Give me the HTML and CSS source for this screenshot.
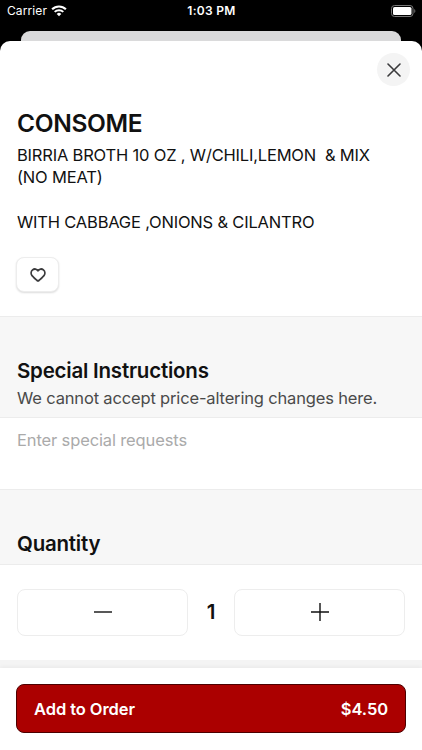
FILE: index.html
```html
<!DOCTYPE html>
<html lang="en">
<head>
    <meta charset="UTF-8">
    <meta name="viewport" content="width=device-width, initial-scale=1.0">
    <title>Consome</title>
    <link rel="stylesheet" href="styles.css">
</head>
<body>
    <div class="status-bar">
        <div class="carrier">
            <span>Carrier</span>
            <svg class="wifi-icon" width="16" height="12" viewBox="0 0 16 12" fill="none" stroke="#fff">
                <path d="M1.1 4.3a9.8 9.8 0 0 1 13.8 0" stroke-width="2.1"/>
                <path d="M3.7 6.9a6.1 6.1 0 0 1 8.6 0" stroke-width="2"/>
                <path d="M8 11.3L5.7 8.9a3.3 3.3 0 0 1 4.6 0z" fill="#fff" stroke="none"/>
            </svg>
        </div>
        <div class="time">1:03 PM</div>
        <div class="battery">
            <svg width="25" height="12" viewBox="0 0 25 12">
                <rect x="0.5" y="0.5" width="21.5" height="11" rx="3" fill="none" stroke="#777"/>
                <rect x="2" y="2" width="18.5" height="8" rx="1.6" fill="#fff"/>
                <path d="M23.3 4v4c1.4-.6 1.4-3.4 0-4z" fill="#777"/>
            </svg>
        </div>
    </div>
    <div class="back-sheet"></div>

    <div class="sheet">
        <div class="product">
            <button class="close-button" aria-label="Close">
                <svg width="14" height="14" viewBox="0 0 14 14" fill="none" stroke="#3a3a3c" stroke-width="1.6" stroke-linecap="round">
                    <path d="M1 1l12 12M13 1L1 13"/>
                </svg>
            </button>
            <h1 class="product-title">CONSOME</h1>
            <p class="product-desc">BIRRIA BROTH 10 OZ , W/CHILI,LEMON  &amp; MIX
(NO MEAT)

WITH CABBAGE ,ONIONS &amp; CILANTRO</p>
            <button class="like-button" aria-label="Favorite">
                <svg width="16" height="14" viewBox="0 0 16 14" fill="none" stroke="#3a3a3c" stroke-width="1.8" stroke-linejoin="round">
                    <path d="M8 2.7C6.8.8 4.3.5 2.6 1.9.8 3.4.7 6 2.2 7.8 3.5 9.5 5.2 11 7 12.4c.7.5 1.3.5 2 0 1.8-1.4 3.5-2.9 4.8-4.6 1.5-1.8 1.4-4.4-.4-5.9C11.7.5 9.2.8 8 2.7z"/>
                </svg>
            </button>
        </div>

        <div class="section-header instructions-header">
            <h2>Special Instructions</h2>
            <p>We cannot accept price-altering changes here.</p>
        </div>
        <textarea class="requests" placeholder="Enter special requests"></textarea>

        <div class="section-header quantity-header">
            <h2>Quantity</h2>
        </div>
        <div class="quantity-selector">
            <button class="step-button" id="minusButton" aria-label="Decrease">
                <svg width="18" height="18" viewBox="0 0 18 18" stroke="#111" stroke-width="1.4">
                    <path d="M0 9h18"/>
                </svg>
            </button>
            <span class="quantity" id="quantity">1</span>
            <button class="step-button" id="plusButton" aria-label="Increase">
                <svg width="18" height="18" viewBox="0 0 18 18" stroke="#111" stroke-width="1.4">
                    <path d="M0 9h18M9 0v18"/>
                </svg>
            </button>
        </div>
        <div class="spacer"></div>

        <div class="footer">
            <button class="order-button">
                <span>Add to Order</span>
                <span class="order-price" id="totalPrice">$4.50</span>
            </button>
        </div>
    </div>

    <script>
        const price = 4.5;
        let qty = 1;

        function changeQuantity(diff) {
            qty = Math.max(1, qty + diff);
            document.getElementById('quantity').textContent = qty;
            document.getElementById('totalPrice').textContent = '$' + (qty * price).toFixed(2);
        }

        document.getElementById('minusButton').addEventListener('click', function() {
            changeQuantity(-1);
        });
        document.getElementById('plusButton').addEventListener('click', function() {
            changeQuantity(1);
        });
    </script>
</body>
</html>
```

FILE: styles.css
```css
* {
    box-sizing: border-box;
}
body {
    margin: 0;
    height: 750px;
    background-color: #000;
    font-family: Inter, sans-serif;
    color: #111;
    display: flex;
    flex-direction: column;
    overflow: hidden;
}
h1, h2, p {
    margin: 0;
}
button {
    font-family: inherit;
    padding: 0;
    cursor: pointer;
}
svg {
    display: block;
}
.status-bar {
    height: 31px;
    padding: 0 6px 10px 7px;
    display: grid;
    grid-template-columns: 1fr auto 1fr;
    align-items: center;
    color: #fff;
    font-size: 12px;
}
.carrier {
    display: flex;
    align-items: center;
    gap: 4px;
    letter-spacing: 0.1px;
}
.time {
    font-weight: 600;
    letter-spacing: 0.3px;
}
.battery {
    justify-self: end;
}
.back-sheet {
    height: 10px;
    margin: 0 21px;
    background-color: #dadadb;
    border-radius: 9px 9px 0 0;
}
.sheet {
    flex: 1;
    display: flex;
    flex-direction: column;
    background-color: #fff;
    border-radius: 10px 10px 0 0;
}
.product {
    height: 275px;
    padding: 12px 16px 0 17px;
    display: flex;
    flex-direction: column;
    align-items: flex-start;
}
.close-button {
    width: 33px;
    height: 33px;
    margin-right: -4px;
    align-self: flex-end;
    display: flex;
    align-items: center;
    justify-content: center;
    background-color: #f4f4f4;
    border: none;
    border-radius: 50%;
}
.product-title {
    margin-top: 22px;
    font-size: 24.5px;
    font-weight: 600;
    line-height: 30px;
    letter-spacing: -0.35px;
}
.product-desc {
    margin-top: 6px;
    font-size: 16.5px;
    line-height: 22.3px;
    letter-spacing: -0.19px;
    white-space: pre;
}
.like-button {
    width: 43px;
    height: 35px;
    margin-top: 24px;
    margin-left: -1px;
    display: flex;
    align-items: center;
    justify-content: center;
    background-color: #fff;
    border: 1px solid #ededed;
    border-radius: 8px;
    box-shadow: 0 1px 2px rgba(0, 0, 0, 0.14);
}
.section-header {
    padding: 0 17px;
    background-color: #f7f7f7;
    border-top: 1px solid #ececec;
    border-bottom: 1px solid #ececec;
}
.section-header h2 {
    font-size: 20.5px;
    font-weight: 600;
    line-height: 26px;
    letter-spacing: -0.22px;
}
.section-header p {
    margin-top: 3px;
    font-size: 16.5px;
    line-height: 22px;
    letter-spacing: -0.16px;
    color: #4a4a4a;
}
.instructions-header {
    height: 102px;
    padding-top: 41px;
}
.requests {
    height: 71px;
    padding: 11px 17px;
    border: none;
    outline: none;
    resize: none;
    font-family: inherit;
    font-size: 16.5px;
    line-height: 22px;
    letter-spacing: -0.13px;
}
.requests::placeholder {
    color: #aaa;
}
.quantity-header {
    height: 76px;
    padding-top: 41px;
}
.quantity-selector {
    height: 95px;
    padding: 0 17px;
    display: flex;
    align-items: center;
}
.step-button {
    flex: 1;
    height: 47px;
    padding-bottom: 1px;
    display: flex;
    align-items: center;
    justify-content: center;
    background-color: #fff;
    border: 1px solid #ededed;
    border-radius: 8px;
}
.quantity {
    width: 46px;
    padding-bottom: 2px;
    text-align: center;
    font-size: 20.5px;
    font-weight: 600;
}
.spacer {
    height: 8px;
    background-color: #f4f4f4;
}
.footer {
    flex: 1;
    padding: 16px 16px 0;
    background-color: #fff;
    box-shadow: 0 -1px 4px rgba(0, 0, 0, 0.05);
}
.order-button {
    width: 100%;
    height: 49px;
    padding: 0 17px;
    display: flex;
    align-items: center;
    justify-content: space-between;
    background-color: #ab0000;
    border: 1px solid #4d0000;
    border-radius: 8px;
    color: #fff;
    font-size: 16.5px;
    font-weight: 600;
    letter-spacing: -0.08px;
}
```
